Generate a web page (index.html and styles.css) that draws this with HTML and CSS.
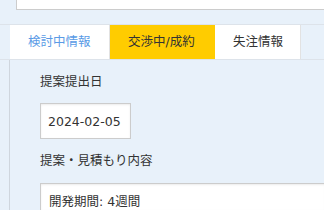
FILE: index.html
```html
<!DOCTYPE html>
<html>
    <head>
        <title>案件詳細</title>
        <meta charset="UTF-8">
        <link rel="stylesheet" href="styles.css">
    </head>
    <body>
        <div class="top-box"></div>
        <div class="tabs">
            <div class="tab tab-link">検討中情報</div>
            <div class="tab tab-active">交渉中/成約</div>
            <div class="tab">失注情報</div>
        </div>
        <div class="panel">
            <p class="label">提案提出日</p>
            <div class="date-box">2024-02-05</div>
            <p class="label">提案・見積もり内容</p>
            <div class="text-box">開発期間: 4週間</div>
        </div>
    </body>
</html>
```

FILE: styles.css
```css
body{
    margin: 0;
    background: #e8f1fa;
    font-family: "DejaVu Sans", "Noto Sans CJK JP", sans-serif;
    font-size: 12.5px;
    color: #333;
    overflow: hidden;
}

.top-box{
    margin-left: 16px;
    height: 9px;
    background: white;
    border-left: 1px solid #ccc;
    border-bottom: 1px solid #ccc;
}

.tabs{
    display: flex;
    margin-top: 14px;
    padding-left: 10px;
    border-top: 1px solid #dde3ea;
    border-bottom: 1px solid #dde3ea;
}

.tab{
    height: 34px;
    line-height: 34px;
    padding: 0 18px;
    background: white;
    border-right: 1px solid #e2e2e2;
    white-space: nowrap;
}

.tab-link{
    width: 63px;
    color: #5a9be6;
}

.tab-active{
    width: 69px;
    background: #ffcc00;
    border-right: none;
}

.tab:last-child{
    width: 49px;
}

.panel{
    margin-left: 9px;
    border-left: 1px solid #cfd6de;
    padding: 13px 0 0 30px;
}

.label{
    margin: 0;
    height: 18px;
    line-height: 18px;
}

.date-box{
    display: inline-block;
    margin: 12px 0 13px 0;
    width: 91px;
    height: 36px;
    line-height: 35px;
    box-sizing: border-box;
    padding-left: 7px;
    background: white;
    border: 1px solid #ccc;
    box-shadow: inset 0 1px 2px rgba(0,0,0,0.08);
}

.text-box{
    margin-top: 13px;
    margin-right: -2px;
    height: 27px;
    padding: 7px 8px 0 8px;
    box-sizing: border-box;
    background: white;
    border: 1px solid #ccc;
    border-bottom: none;
    box-shadow: inset 0 1px 2px rgba(0,0,0,0.08);
    overflow: hidden;
}
```
